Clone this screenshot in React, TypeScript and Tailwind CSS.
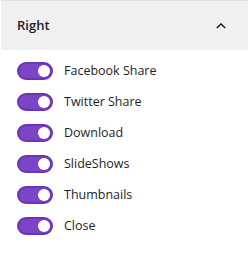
import { useState } from "react";

const items = ["Facebook Share", "Twitter Share", "Download", "SlideShows", "Thumbnails", "Close"];

function Toggle({ on, onClick }: { on: boolean; onClick: () => void }) {
  return (
    <button
      onClick={onClick}
      className={`flex items-center w-[36px] h-[18px] rounded-full border-2 px-[1px] ${
        on ? "bg-[#7c45c8] border-[#6a35b3] justify-end" : "bg-white border-[#1e1e1e] justify-start"
      }`}
    >
      <span className={`block w-[12px] h-[12px] rounded-full ${on ? "bg-white" : "bg-[#1e1e1e]"}`} />
    </button>
  );
}

export default function App() {
  const [state, setState] = useState(items.map(() => true));

  return (
    <div className="w-[248px] h-[261px] bg-white font-['Open_Sans',sans-serif] text-[#1e1e1e]">
      <div className="ml-[1px] h-[50px] bg-[#f0f0f0] border-t border-[#e0e0e0] flex items-center justify-between pl-[16px] pr-[22px]">
        <span className="text-[13px] font-semibold">Right</span>
        <svg width="10" height="6" viewBox="0 0 10 6" fill="none">
          <path d="M0.8 5 L5 1 L9.2 5" stroke="#1e1e1e" strokeWidth="1.5" />
        </svg>
      </div>
      <div className="flex flex-col gap-[13px] pt-[12px] pl-[17px]">
        {items.map((label, i) => (
          <div key={label} className="flex items-center gap-[11px] h-[18px]">
            <Toggle on={state[i]} onClick={() => setState(s => s.map((v, j) => (j === i ? !v : v)))} />
            <span className="text-[12.5px]">{label}</span>
          </div>
        ))}
      </div>
    </div>
  );
}
